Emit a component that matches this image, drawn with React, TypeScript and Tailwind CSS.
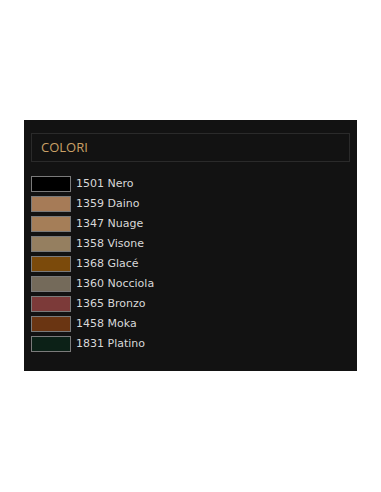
const colori = [
  { code: '1501', name: 'Nero', color: '#000000' },
  { code: '1359', name: 'Daino', color: '#a67b57' },
  { code: '1347', name: 'Nuage', color: '#a57e58' },
  { code: '1358', name: 'Visone', color: '#957f60' },
  { code: '1368', name: 'Glacé', color: '#7b4a0b' },
  { code: '1360', name: 'Nocciola', color: '#746a5a' },
  { code: '1365', name: 'Bronzo', color: '#7c3a39' },
  { code: '1458', name: 'Moka', color: '#6a3512' },
  { code: '1831', name: 'Platino', color: '#0c2117' }
];

export default function App() {
  return (
    <div className="w-[381px] h-[492px] bg-white pt-[120px] pl-[24px]">
      <div className="w-[333px] h-[251px] bg-[#121212] pt-[13px] px-[7px]">
        <div className="h-[29px] border border-[#2a2a2a] flex items-center pl-[9px]">
          <span className="text-[13px] text-[#c9a066]" style={{ fontFamily: '"Open Sans", sans-serif' }}>
            COLORI
          </span>
        </div>
        <ul className="mt-[12px] flex flex-col" style={{ fontFamily: '"DejaVu Sans", Verdana, sans-serif' }}>
          {colori.map((c) => (
            <li key={c.code} className="h-[20px] flex items-center">
              <div className="w-[40px] h-[16px] border border-[#7a7a7a]" style={{ backgroundColor: c.color }} />
              <span className="ml-[5px] text-[11px] text-[#d8d8d8]">
                {c.code} {c.name}
              </span>
            </li>
          ))}
        </ul>
      </div>
    </div>
  );
}
